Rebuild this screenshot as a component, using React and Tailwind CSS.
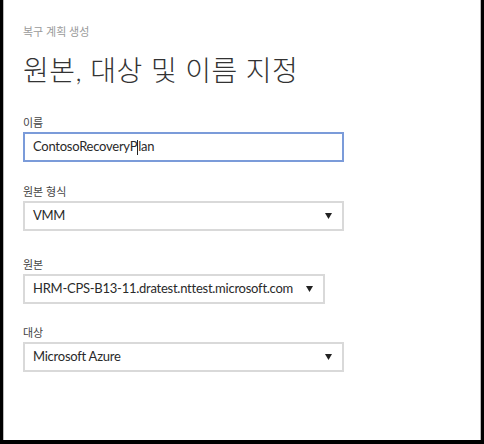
import React from 'react';

const font = { fontFamily: 'Lato, "Noto Sans CJK KR", sans-serif' };

function Arrow() {
  return (
    <svg width="7" height="6" viewBox="0 0 7 6" className="shrink-0">
      <path d="M0 0 H7 L3.5 6 Z" fill="#222" />
    </svg>
  );
}

function Select({ value, className = 'w-[321px]' }) {
  return (
    <div className={`${className} h-[30px] border-2 border-[#d9d9d9] flex items-center justify-between pl-[8px] pr-[10px] text-[13px] tracking-[-0.25px] text-[#2a2a2a] whitespace-nowrap`}>
      <span>{value}</span>
      <Arrow />
    </div>
  );
}

function Field({ label, className = '', children }) {
  return (
    <div className={`flex flex-col ${className}`}>
      <label className="text-[11px] text-[#444] leading-none mb-[4px]">{label}</label>
      {children}
    </div>
  );
}

export default function App() {
  return (
    <div className="w-[484px] h-[444px] bg-white" style={font}>
      <div className="w-[484px] h-[444px] border-l-[3px] border-r-[3px] border-b-4 border-black">
        <div className="h-full border-l border-r border-[#bbb] pl-[19px] pt-[26px]">
          <p className="text-[11px] text-[#9a9a9a] leading-none">복구 계획 생성</p>
          <h1 className="text-[28px] font-light text-[#333] leading-none mt-[19px] tracking-[0.5px]">원본, 대상 및 이름 지정</h1>
          <div className="mt-[33px] flex flex-col">
            <Field label="이름">
              <div className="w-[321px] h-[30px] border-2 border-[#7b9bd9] flex items-center pl-[8px] text-[13px] tracking-[-0.25px] text-[#2a2a2a]">
                <span>ContosoRecoveryP</span>
                <span className="w-px h-[15px] bg-[#222]" />
                <span>lan</span>
              </div>
            </Field>
            <Field label="원본 형식" className="mt-[24px]">
              <Select value="VMM" />
            </Field>
            <Field label="원본" className="mt-[28px]">
              <Select value="HRM-CPS-B13-11.dratest.nttest.microsoft.com" className="w-[302px]" />
            </Field>
            <Field label="대상" className="mt-[23px]">
              <Select value="Microsoft Azure" />
            </Field>
          </div>
        </div>
      </div>
    </div>
  );
}
